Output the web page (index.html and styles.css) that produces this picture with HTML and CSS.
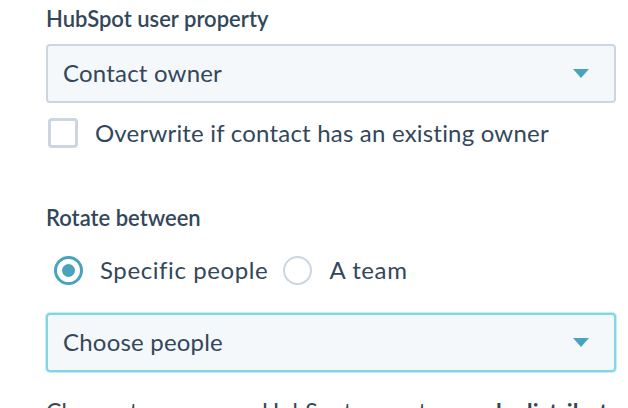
FILE: index.html
```html
<!DOCTYPE html>
<html>
<head>
<meta charset="utf-8">
<link rel="stylesheet" href="styles.css">
</head>
<body>
<div class="form">
  <div class="label">HubSpot user property</div>
  <div class="select">
    <span class="select-text">Contact owner</span>
    <span class="caret"></span>
  </div>
  <div class="check-row">
    <span class="checkbox"></span>
    <span class="check-text">Overwrite if contact has an existing owner</span>
  </div>
  <div class="label label-rotate">Rotate between</div>
  <div class="radio-row">
    <span class="radio radio-on"><span class="radio-dot"></span></span>
    <span class="radio-text">Specific people</span>
    <span class="radio"></span>
    <span class="radio-text">A team</span>
  </div>
  <div class="select select-focus">
    <span class="select-text">Choose people</span>
    <span class="caret"></span>
  </div>
  <p class="help">Choose two or more HubSpot users to <b>evenly distribute</b> contacts between.</p>
</div>
</body>
</html>
```
FILE: styles.css
```css
html, body {
  margin: 0;
  padding: 0;
  background: #ffffff;
  overflow: hidden;
}
.form {
  padding: 4px 12px 0 46px;
  width: 570px;
  font-family: Lato, "Noto Sans", sans-serif;
  color: #33475b;
}
.label {
  font-size: 22px;
  font-weight: 600;
  line-height: 30px;
}
.select {
  box-sizing: border-box;
  margin-top: 10px;
  height: 59px;
  border: 2px solid #cbd6e2;
  border-radius: 4px;
  background: #f5f8fa;
  display: flex;
  align-items: center;
  justify-content: space-between;
  padding: 0 25px 2px 15px;
}
.select-text {
  font-size: 24px;
  line-height: 30px;
  letter-spacing: 0.2px;
}
.caret {
  width: 0;
  height: 0;
  margin-top: 2px;
  border-left: 8px solid transparent;
  border-right: 8px solid transparent;
  border-top: 9px solid #4aa3bd;
}
.check-row {
  display: flex;
  align-items: center;
  margin-top: 15px;
  padding-left: 2px;
  gap: 17px;
}
.checkbox {
  box-sizing: border-box;
  width: 30px;
  height: 30px;
  border: 3px solid #cbd6e2;
  border-radius: 4px;
  background: #fff;
}
.check-text {
  font-size: 24px;
  line-height: 30px;
  letter-spacing: 0.2px;
}
.label-rotate {
  margin-top: 55px;
}
.radio-row {
  display: flex;
  align-items: center;
  margin-top: 22px;
  padding-left: 8px;
}
.radio {
  box-sizing: border-box;
  width: 29px;
  height: 29px;
  border: 2px solid #cbd6e2;
  border-radius: 50%;
  display: flex;
  align-items: center;
  justify-content: center;
  background: #fff;
}
.radio-on {
  border: 3px solid #4aa3bd;
}
.radio-dot {
  width: 13px;
  height: 13px;
  border-radius: 50%;
  background: #4aa3bd;
}
.radio-text {
  font-size: 24px;
  line-height: 30px;
  letter-spacing: 0.6px;
  margin-left: 17px;
  margin-right: 15px;
}
.select-focus {
  margin-top: 28px;
  border-color: #7fd6e6;
  box-shadow: 0 0 0 1px #c7eef5;
}
.help {
  margin: 24px -20px 0 0;
  font-size: 23px;
  line-height: 30px;
  letter-spacing: 0.2px;
}
.help b {
  font-weight: 700;
}
```
